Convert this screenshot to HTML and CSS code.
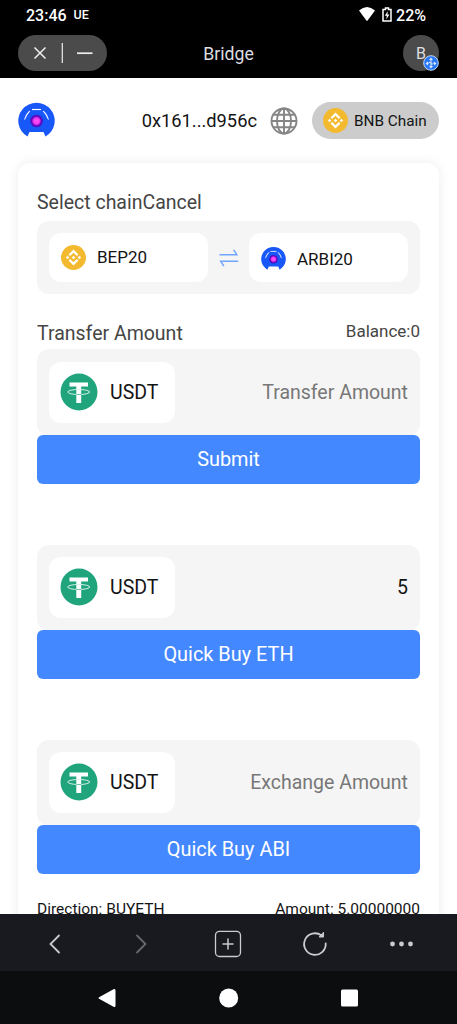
FILE: index.html
```html
<!DOCTYPE html>
<html lang="en">
<head>
<meta charset="utf-8">
<title>Bridge</title>
<link rel="stylesheet" href="styles.css">
</head>
<body>
<svg class="defs" aria-hidden="true">
  <symbol id="bnb" viewBox="0 0 24 24">
    <circle cx="12" cy="12" r="12" fill="#f3ba2f"/>
    <g fill="none" stroke="#fff" stroke-width="2.1"><path d="M8 9.900l4-4 4 4M8 14.100l4 4 4-4"/></g>
    <path d="M12 10.300l1.700 1.700-1.700 1.700-1.700-1.700zM6.300 10.400L7.900 12l-1.600 1.600L4.700 12zM17.700 10.400l1.600 1.600-1.600 1.600-1.600-1.600z" fill="#fff"/>
  </symbol>
  <symbol id="abi" viewBox="0 0 37 36">
    <radialGradient id="eye"><stop offset="0" stop-color="#ff55f5"/><stop offset=".5" stop-color="#e93aef"/><stop offset=".75" stop-color="#6a08c0"/><stop offset="1" stop-color="#3b12c5"/></radialGradient>
    <path d="M9.500 34.500A18.200 18 0 1 1 27.500 34.500L25.500 30H11.500z" fill="#1857f8"/>
    <path d="M14 7.500h9" stroke="#fff" stroke-width="1.200"/>
    <path d="M11.500 9Q8 11.500 6.600 17.500Q8.500 13 12 9zM25.500 9Q29 11.500 30.400 17.500Q28.500 13 25 9z" fill="#fff" stroke="#fff" stroke-width=".6"/>
    <circle cx="18.500" cy="19" r="6.300" fill="url(#eye)"/>
  </symbol>
  <symbol id="usdt" viewBox="0 0 38 38">
    <circle cx="19" cy="19" r="18.500" fill="#1fa47c"/>
    <path d="M9.500 9.500h18.500v4h-6.800v16.500h-4.900V13.500H9.500z" fill="#fff"/>
    <ellipse cx="18.700" cy="19" rx="11" ry="2.500" fill="none" stroke="#d9f2e9" stroke-width="1"/>
    <path d="M16.300 21.500h4.900" stroke="#1fa47c" stroke-width=".6"/>
  </symbol>
</svg>

<div class="status">
  <span class="clock">23:46</span><span class="ue">UE</span>
  <svg class="wifi" width="16" height="14" viewBox="0 0 16 14"><path d="M0 3.500Q8-3.500 16 3.500L8.600 13.500Q8 14.300 7.400 13.500z" fill="#fff"/></svg>
  <svg class="battery" width="10" height="15" viewBox="0 0 10 15"><path d="M3.500 1h3v1.500H9V14H1V2.500h2.500z" fill="none" stroke="#fff" stroke-width="1.500"/><path d="M5.800 4L2.800 8.700h2L4.300 12.500 7.400 7.600h-2z" fill="#fff"/></svg>
  <span class="percent">22%</span>
</div>

<header class="titlebar">
  <div class="capsule">
    <svg width="89" height="36" viewBox="0 0 89 36" fill="none" stroke="#eee"><path d="M16.500 12.500l11 11M27.500 12.500l-11 11" stroke-width="1.500"/><path d="M44.300 8v20" stroke-width="1.200"/><path d="M59 18.200h15.500" stroke-width="1.700"/></svg>
  </div>
  <h1>Bridge</h1>
  <div class="avatar">B
    <svg class="badge" width="16" height="16" viewBox="0 0 16 16"><circle cx="8" cy="8" r="7.300" fill="#2878f5" stroke="#bed7fb" stroke-width="1"/><path d="M8 2.500l2 2.500H6zM8 13.500l2-2.500H6zM2.500 8.500L5 6.500v4zM13.500 8.500L11 6.500v4z" fill="#dceaff"/><path d="M5 8.500l2-1.500 2 2.500 2-2M8 5v6" fill="none" stroke="#dceaff" stroke-width="1"/></svg>
  </div>
</header>

<main class="page">
  <div class="account">
    <svg class="logo" width="37" height="36"><use href="#abi"/></svg>
    <span class="address">0x161...d956c</span>
    <svg class="globe" width="28" height="28" viewBox="0 0 28 28" fill="none" stroke="#858585" stroke-width="1.900"><circle cx="14" cy="14" r="12.500"/><ellipse cx="14" cy="14" rx="7" ry="12.500"/><path d="M14 1v26M1 14h26M3 7.700h22M3 20.300h22"/></svg>
    <div class="chain"><svg width="25" height="25"><use href="#bnb"/></svg><span>BNB Chain</span></div>
  </div>

  <section class="card">
    <h2>Select chainCancel</h2>
    <div class="chains">
      <div class="choice"><svg width="25" height="25"><use href="#bnb"/></svg><span>BEP20</span></div>
      <svg class="swap" width="20" height="18" viewBox="0 0 20 18" fill="none" stroke="#71a5fd" stroke-width="1.500"><path d="M.5 5.700h17.300L14.700 .8M19.200 12.200H1.700L4.800 17.200"/></svg>
      <div class="choice arbi"><svg width="25" height="25"><use href="#abi"/></svg><span>ARBI20</span></div>
    </div>
    <div class="amount-head"><span>Transfer Amount</span><span class="balance">Balance:0</span></div>
    <div class="field"><div class="token"><svg width="38" height="38"><use href="#usdt"/></svg><span>USDT</span></div><span class="hint">Transfer Amount</span></div>
    <div class="button">Submit</div>
    <div class="field"><div class="token"><svg width="38" height="38"><use href="#usdt"/></svg><span>USDT</span></div><span class="value">5</span></div>
    <div class="button">Quick Buy ETH</div>
    <div class="field"><div class="token"><svg width="38" height="38"><use href="#usdt"/></svg><span>USDT</span></div><span class="hint">Exchange Amount</span></div>
    <div class="button last">Quick Buy ABI</div>
    <div class="record"><span>Direction: BUYETH</span><span>Amount: 5.00000000</span></div>
  </section>
</main>

<nav class="toolbar">
  <svg width="457" height="57" viewBox="0 0 457 57" fill="none" stroke="#cbcbcf" stroke-width="1.800" stroke-linecap="round">
    <path d="M59 21.500l-8.500 8.500 8.500 8.500"/>
    <path d="M137 21.500l8.500 8.500-8.500 8.500" stroke="#69696d"/>
    <rect x="215.500" y="17.300" width="25" height="25.200" rx="4" stroke-width="1.300"/><path d="M223 30h10M228 25v10" stroke-width="1.500"/>
    <path d="M325.700 29.300A10.800 10.800 0 1 1 321.500 21.500"/><path d="M323.500 18.700v4.300h-4z" fill="#cbcbcf" stroke-width="1"/>
    <g fill="#cbcbcf" stroke="none"><circle cx="392.500" cy="30" r="2.400"/><circle cx="401.500" cy="30" r="2.400"/><circle cx="410.500" cy="30" r="2.400"/></g>
  </svg>
</nav>
<footer class="system">
  <svg width="457" height="53" viewBox="0 0 457 53" fill="#fff"><path d="M99.500 26L113.500 18.300Q115.500 17.300 115.500 19.500V34.500Q115.500 36.700 113.500 35.700L99.500 28Q97.500 27 99.500 26z"/><circle cx="228.700" cy="27" r="9.500"/><rect x="341" y="18.500" width="17" height="17" rx="1.500"/></svg>
</footer>
</body>
</html>
```

FILE: styles.css
```css
* { box-sizing: border-box; }
body { margin: 0; width: 457px; height: 1024px; overflow: hidden; display: flex; flex-direction: column; background: #fff; color: #141414; font-family: Roboto, sans-serif; }
svg { display: block; flex: none; }
.defs { position: absolute; width: 0; height: 0; }
.status { height: 30px; flex: none; display: flex; align-items: center; padding: 0 31px 0 26px; background: #000; color: #fff; font-size: 16px; font-weight: 500; }
.ue { margin: -1px 0 0 7px; font-size: 12.500px; }
.wifi { margin: -3px 0 0 auto; }
.battery { margin: -2px 4px 0 7px; }
.titlebar { height: 48px; flex: none; display: flex; align-items: center; justify-content: space-between; padding: 0 18px; background: #000; color: #dedee0; }
.titlebar h1 { flex: 1; margin: 0; padding-right: 53px; font-size: 17.700px; font-weight: 400; text-align: center; }
.capsule { width: 89px; height: 36px; margin-top: -2px; border-radius: 18px; background: #4b4b4b; }
.avatar { position: relative; width: 36px; height: 36px; margin-top: -2px; border-radius: 50%; background: #4b4b4b; text-align: center; line-height: 37px; font-size: 16px; }
.badge { position: absolute; right: 0; bottom: 0; }
.page { flex: 1; min-height: 0; overflow: hidden; padding: 24px 18px 0; }
.account { height: 37px; display: flex; align-items: center; }
.logo { margin-top: -1px; }
.address { margin-left: auto; font-size: 18.300px; }
.globe { margin: 0 14px 0 13px; }
.chain { display: flex; align-items: center; width: 127px; height: 37px; padding-left: 11px; gap: 6px; border-radius: 19px; background: #ccc; font-size: 15.300px; white-space: nowrap; }
.card { margin-top: 24px; height: 800px; padding: 26px 19px; border-radius: 12px; box-shadow: 0 0 12px rgba(0,0,0,.08); }
.card h2 { margin: 0 0 4px; height: 28px; line-height: 28px; font-size: 19.500px; font-weight: 400; color: #454545; }
.chains { height: 73px; padding: 12px; display: flex; align-items: center; justify-content: space-between; border-radius: 12px; background: #f5f5f5; }
.choice { width: 159px; height: 49px; display: flex; align-items: center; gap: 11px; padding: 0 0 1px 12px; border-radius: 12px; background: #fff; font-size: 17px; }
.arbi { padding: 2px 0 0 12px; }
.amount-head { height: 55px; display: flex; justify-content: space-between; padding-top: 26px; line-height: 28px; font-size: 19.500px; color: #454545; }
.balance { margin-top: -3px; font-size: 17px; }
.field { height: 86px; display: flex; align-items: center; justify-content: space-between; padding: 0 12px 2px; border-radius: 12px; background: #f5f5f5; font-size: 19.500px; }
.token { width: 126px; height: 61px; display: flex; align-items: center; padding-left: 11px; gap: 12px; border-radius: 12px; background: #fff; font-size: 19.500px; }
.hint { color: #777; }
.button { height: 49px; margin: -1px 0 61px; border-radius: 6px; background: #4488ff; color: #fff; text-align: center; line-height: 49px; font-size: 19.900px; }
.amount-head + .field { height: 87px; padding-bottom: 1px; }
.button.last { margin-bottom: 25px; }
.record { display: flex; justify-content: space-between; font-size: 15.500px; line-height: 20px; }
.toolbar { height: 57px; flex: none; background: #191a1f; }
.system { height: 53px; flex: none; background: #0c0d0f; }
```
